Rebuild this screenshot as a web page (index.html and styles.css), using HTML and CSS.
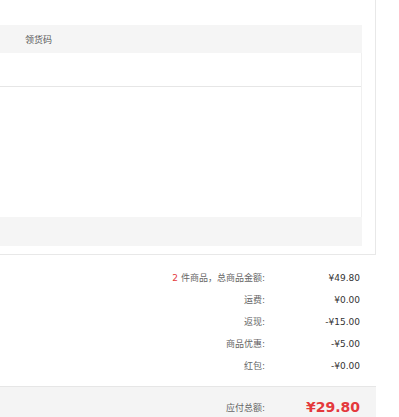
FILE: index.html
```html
<!DOCTYPE html>
<html>
<head>
  <meta charset="utf-8">
  <title>订单结算</title>
  <link rel="stylesheet" href="styles.css">
</head>
<body>
  <div class="order-box">
    <div class="goods-table">
      <div class="goods-head">
        <span class="col-code">领货码</span>
      </div>
      <div class="goods-body">
        <div class="goods-row"></div>
      </div>
      <div class="goods-foot"></div>
    </div>
  </div>

  <div class="summary">
    <div class="summary-row">
      <span class="label"><em>2</em> 件商品，总商品金额:</span>
      <span class="value">¥49.80</span>
    </div>
    <div class="summary-row">
      <span class="label">运费:</span>
      <span class="value">¥0.00</span>
    </div>
    <div class="summary-row">
      <span class="label">返现:</span>
      <span class="value">-¥15.00</span>
    </div>
    <div class="summary-row">
      <span class="label">商品优惠:</span>
      <span class="value">-¥5.00</span>
    </div>
    <div class="summary-row">
      <span class="label">红包:</span>
      <span class="value">-¥0.00</span>
    </div>
  </div>

  <div class="total">
    <span class="label">应付总额:</span>
    <span class="total-price">¥29.80</span>
  </div>
</body>
</html>
```

FILE: styles.css
```css
body {
  margin: 0;
  padding: 0;
  background-color: #fff;
  color: #333;
  font-family: "DejaVu Sans", "Noto Sans CJK SC", sans-serif;
  font-size: 9px;
}

/* Goods list box */
.order-box {
  width: 362px;
  padding: 25px 13px 8px 0;
  border-right: 1px solid #e8e8e8;
  border-bottom: 1px solid #e8e8e8;
}

.goods-head {
  display: flex;
  align-items: center;
  height: 28px;
  padding-left: 25px;
  background-color: #f5f5f5;
  color: #555;
}

.goods-body {
  height: 164px;
  border-right: 1px solid #f0f0f0;
}

.goods-row {
  height: 33px;
  border-bottom: 1px solid #e6e6e6;
}

.goods-foot {
  height: 29px;
  background-color: #f5f5f5;
}

/* Price summary */
.summary {
  width: 376px;
  padding: 12px 0 9px;
}

.summary-row {
  display: flex;
  justify-content: flex-end;
  height: 22px;
  line-height: 22px;
  padding-right: 16px;
}

.label {
  color: #666;
  text-align: right;
}

.label em {
  font-style: normal;
  color: #e4393c;
}

.value {
  width: 95px;
  text-align: right;
  color: #333;
}

/* Total bar */
.total {
  display: flex;
  justify-content: flex-end;
  align-items: center;
  width: 360px;
  height: 40px;
  padding: 0 16px 0 0;
  background-color: #f4f4f4;
  border-top: 1px solid #e6e6e6;
}

.total-price {
  width: 95px;
  text-align: right;
  color: #e4393c;
  font-size: 14px;
  font-weight: bold;
}
```
